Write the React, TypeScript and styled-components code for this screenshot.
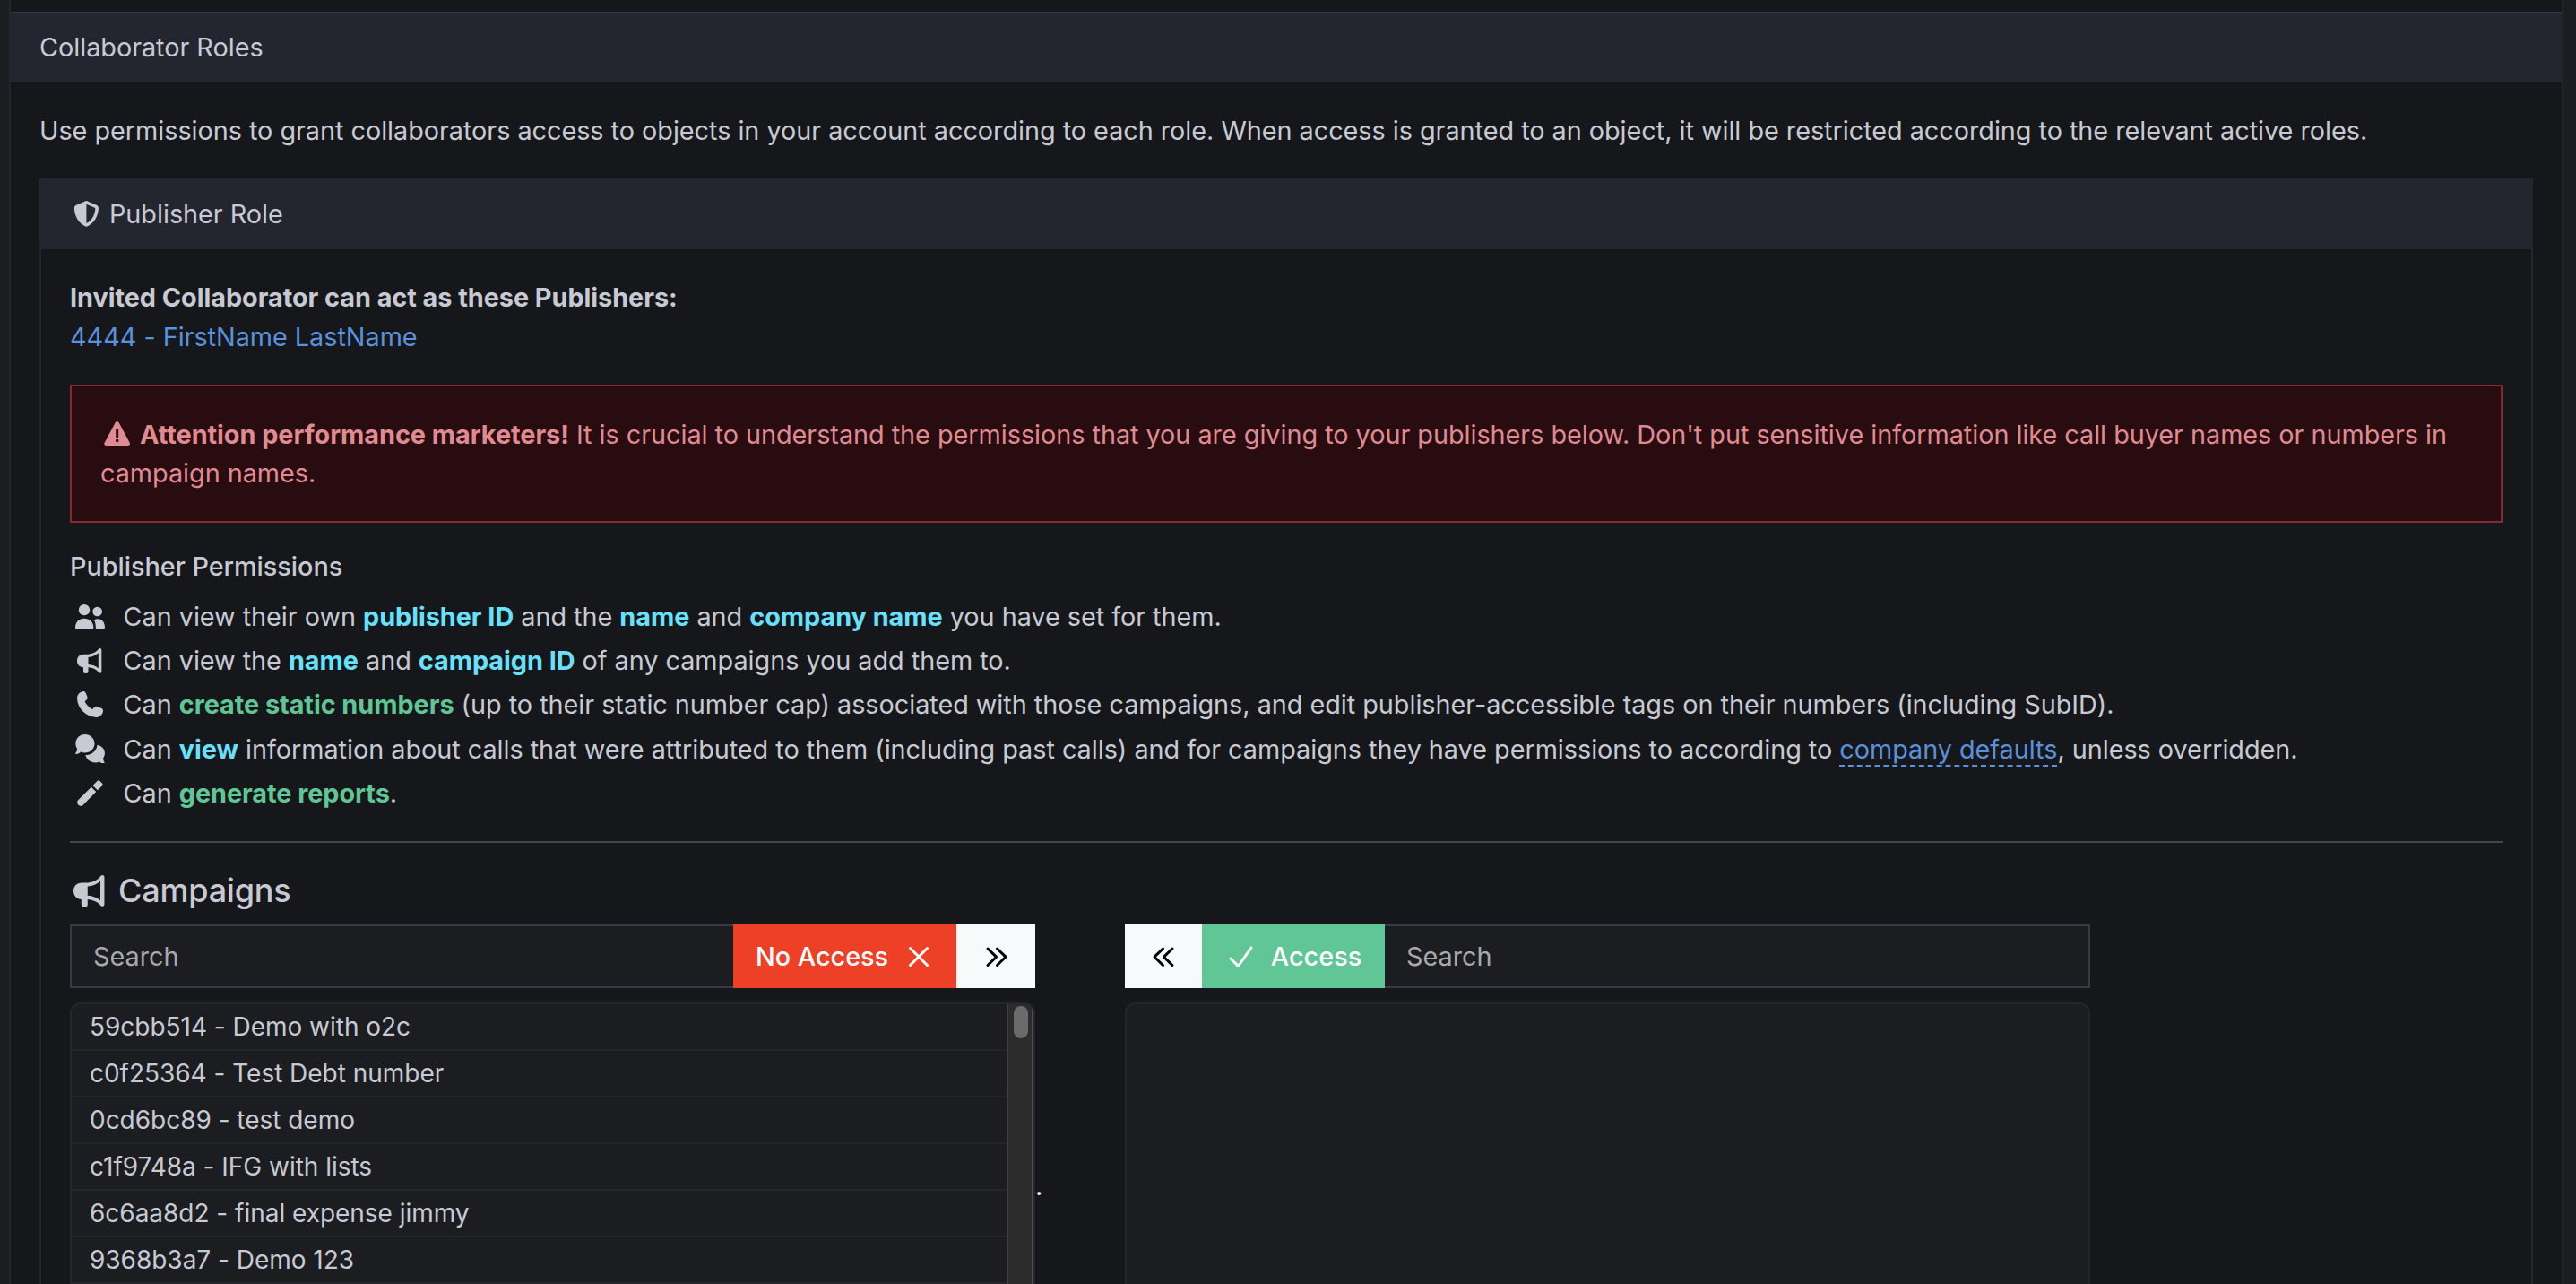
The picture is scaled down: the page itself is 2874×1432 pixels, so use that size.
import React from "react";
import styled, { createGlobalStyle } from "styled-components";
import { FaShieldHalved } from "react-icons/fa6";

const color = {
  page: "#16171b",
  gutter: "#1c1d21",
  surface: "#1c1d21",
  header: "#24262f",
  line: "#24262e",
  input: "#373b45",
  text: "#c8cad3",
  link: "#5a91dc",
  info: "#68e1fd",
  success: "#60c695",
  danger: "#ed4027",
};

const GlobalStyle = createGlobalStyle`
  *, *::before, *::after { box-sizing: border-box; }
  body {
    margin: 0;
    background: ${color.gutter};
    color: ${color.text};
    font: 400 28.8px/43.2px Inter, sans-serif;
    letter-spacing: -0.025px;
  }
`;

const Page = styled.div`
  height: 1432px;
  overflow: hidden;
  padding: 0 14px 0 10px;
`;

const Panel = styled.section`
  height: 1432px;
  overflow: hidden;
  background: ${color.page};
  border: 2px solid ${color.line};
  border-width: 0 2px;
  padding-top: 13px;
`;

const PanelHeader = styled.header`
  height: 79px;
  padding: 16px 32px 0;
  background: ${color.header};
  border-top: 2px solid ${color.input};
`;

const PanelBody = styled.div`
  padding: 32px 32px 0;
`;

const Intro = styled.p`
  margin: 0 0 32px;
  height: 43px;
`;

const Card = styled.section`
  border: 2px solid ${color.line};
  border-top: 0;
`;

const CardHeader = styled.header`
  height: 79px;
  padding: 0 32px;
  display: flex;
  align-items: center;
  gap: 8px;
  background: ${color.header};
`;

const CardBody = styled.div`
  padding: 32px 32px 0;
`;

const IconSlot = styled.span<{ $w: number }>`
  display: inline-flex;
  justify-content: center;
  align-items: center;
  flex: none;
  width: ${(p) => p.$w}px;
`;

const Publishers = styled.div`
  height: 87px;
  margin-bottom: 32px;
  line-height: 43.8px;
`;

const Strong = styled.strong<{ $tone?: "info" | "success" }>`
  font-weight: 700;
  color: ${(p) => (p.$tone ? color[p.$tone] : "inherit")};
`;

const Link = styled.a`
  color: ${color.link};
  text-decoration: none;
`;

const DashedLink = styled(Link)`
  border-bottom: 2px dashed ${color.link};
`;

const Alert = styled.div`
  height: 154px;
  padding: 32px;
  background: #280c0f;
  border: 2px solid #842a30;
  color: #e08a91;

  svg {
    vertical-align: -2px;
  }
`;

const AlertIcon = styled.span`
  display: inline-block;
  width: 36px;
  text-align: center;
`;

const SubTitle = styled.h6`
  margin: 27px 0 9px;
  height: 44px;
  font: inherit;
  font-weight: 500;
`;

const Permissions = styled.ul`
  list-style: none;
  margin: 0;
  padding: 0;
`;

const Permission = styled.li`
  height: 49.2px;
  display: flex;
  align-items: center;
  white-space: nowrap;
`;

const PermissionText = styled.span`
  margin-left: 15.5px;
`;

const Rule = styled.hr`
  margin: 29.5px 0 28px;
  border: 0;
  height: 2px;
  background: #434447;
`;

const SectionTitle = styled.h4`
  margin: 0 0 13px;
  height: 50px;
  display: flex;
  align-items: center;
  gap: 11px;
  font-size: 36px;
  font-weight: 500;
  letter-spacing: -0.2px;
`;

const Transfer = styled.div`
  display: grid;
  grid-template-columns: 1077px 100px 1077px;
`;

const Column = styled.div`
  display: flex;
  flex-direction: column;
  gap: 16px;
`;

const SearchGroup = styled.div`
  display: flex;
  height: 71px;
`;

const SearchInput = styled.input<{ $side: "left" | "right" }>`
  flex: 1;
  min-width: 0;
  height: 71px;
  padding: 0 24px 1px;
  background: ${color.surface};
  border: 2px solid ${color.input};
  border-${(p) => (p.$side === "left" ? "right" : "left")}: 0;
  border-radius: 0;
  outline: 0;
  color: ${color.text};
  font: inherit;

  &::placeholder {
    color: #a8a9ac;
    opacity: 1;
  }
`;

const GroupButton = styled.button<{
  $kind: "danger" | "success" | "light";
  $w: number;
  $gap?: number;
  $pad?: string;
}>`
  width: ${(p) => p.$w}px;
  flex: none;
  display: flex;
  align-items: center;
  justify-content: center;
  gap: ${(p) => p.$gap || 0}px;
  padding: ${(p) => p.$pad || "0"};
  border: 0;
  font: inherit;
  font-weight: 500;
  background: ${(p) => (p.$kind === "light" ? "#f8f9fb" : color[p.$kind])};
  color: ${(p) => (p.$kind === "light" ? "#000" : "#fff")};
`;

const ListBox = styled.div`
  height: 410px;
  display: flex;
  overflow: hidden;
  background: ${color.surface};
  border: 2px solid ${color.line};
  border-radius: 12px;
`;

const Items = styled.ul`
  flex: 1;
  margin: 0;
  padding: 0;
  list-style: none;
`;

const Item = styled.li`
  height: 52px;
  padding-left: 20px;
  border-bottom: 2px solid ${color.line};
  font-size: 28px;
  line-height: 50px;
`;

const ScrollTrack = styled.div`
  width: 30px;
  padding: 2px 4px 0 6px;
  background: #2c2c2c;
  border-left: 2px solid #3d3d3d;
  border-right: 2px solid #505050;
`;

const ScrollThumb = styled.div`
  width: 16px;
  height: 36px;
  border-radius: 8px;
  background: #6b6b6b;
`;

const Separator = styled.div`
  padding-top: 270px;
  color: #fff;
`;

const UsersIcon = () => (
  <svg width="33" height="28" viewBox="41 42 99 84" fill="currentColor">
    <circle cx="71" cy="60.500" r="18.500" />
    <circle cx="115" cy="66" r="16" />
    <path d="M41 120C41 101 54 89 71 89S102 101 102 120Q102 126 96 126H47Q41 126 41 120Z" />
    <path d="M104 95C108 92 112 91 117 91C131 91 140 103 140 120Q140 126 134 126H108C110 123 110 121 109.500 117C109 108 108 101 104 95Z" />
  </svg>
);

const BullhornIcon = ({ size }: { size: number }) => (
  <svg width={size * 0.976} height={size} viewBox="47 188 82 84" fill="currentColor">
    <path
      fillRule="evenodd"
      d="M69 208H84C99 207 109 202 118 192Q120 188 124 188Q129 188 129 193V266Q129 271 124 271Q120 271 118 267C110 258 99 253 84.500 252V266Q84.500 272 78.500 272H74Q68 272 68 266V252C55 251 47 242 47 230C47 217 56 208 69 208ZM84.500 218V242C98 243 109 247 118.500 255V204C109 212 98 217 84.500 218Z"
    />
  </svg>
);

const PhoneIcon = () => (
  <svg width="29" height="29" viewBox="47 333 86 86" fill="currentColor">
    <path d="M65 333.500C69 332 74 334 75.500 338L81 351C82.500 354.500 81.500 358.500 78.500 361L72.500 366C77.500 377 87 386.500 98 392L104 386C106.500 383 110.500 382 114 383.500L128 389.500C132 391 134 395.500 133 399.500C130 411 122 419 110 419C76 417 49 391 47 357C47 345 54 336 65 333.500Z" />
  </svg>
);

const ChatIcon = () => (
  <svg width="33" height="32.500" viewBox="41 474 98 97" fill="currentColor">
    <path d="M73 474C91 474 105 487 105 504.500C105 522 91 535 73 535C68 535 63 534 59 532C55 536 50 539 44 540Q41 540 41 537C45 532 48 526 47 522C43.500 517 42 511 42 504.500C42 487 55 474 73 474Z" />
    <path d="M114 509C129 512 139 523 139 537C139 543 137 548 134 553C133 558 135 563 138 567Q139 571 135 571C130 571 126 569 122 565C118 567 113 568 108 568C91 568 77 557 75 543C94 543 112 530 114 509Z" />
  </svg>
);

const MarkerIcon = () => (
  <svg width="29" height="29" viewBox="47 627 86 87" fill="currentColor">
    <path d="M94 650L110 666L66 711Q62 715 58 713L50 710L47.500 703Q46 698 50 694Z" />
    <path d="M99 645L114 630Q118 626 122 629L131 638Q134 642 131 646L115 661Z" />
  </svg>
);

const WarningIcon = () => (
  <svg width="29" height="27" viewBox="136 780 87 81" fill="currentColor">
    <path
      fillRule="evenodd"
      d="M174 784Q180 776 186 784L222 851Q226 860 216 861H144Q134 860 138 851ZM175.500 808V831Q175.500 835 180 835T184.500 831V808Q184.500 804 180 804T175.500 808ZM180 839A5.500 5.500 0 1 0 180 850A5.500 5.500 0 1 0 180 839Z"
    />
  </svg>
);

const StrokeIcon = ({ w, d }: { w: number; d: string }) => (
  <svg width={w} height="26" viewBox={`0 0 ${w} 26`} fill="none" stroke="currentColor" strokeWidth="3" strokeLinecap="round" strokeLinejoin="round">
    <path d={d} />
  </svg>
);

const campaigns = [
  "59cbb514 - Demo with o2c",
  "c0f25364 - Test Debt number",
  "0cd6bc89 - test demo",
  "c1f9748a - IFG with lists",
  "6c6aa8d2 - final expense jimmy",
  "9368b3a7 - Demo 123",
];

const PermissionRow = ({ icon, children }: { icon: React.ReactNode; children: React.ReactNode }) => (
  <Permission>
    <IconSlot $w={44}>{icon}</IconSlot>
    <PermissionText>{children}</PermissionText>
  </Permission>
);

export default function App() {
  return (
    <Page>
      <GlobalStyle />
      <Panel>
        <PanelHeader>Collaborator Roles</PanelHeader>
        <PanelBody>
          <Intro>
            Use permissions to grant collaborators access to objects in your account according to each role. When access
            is granted to an object, it will be restricted according to the relevant active roles.
          </Intro>
          <Card>
            <CardHeader>
              <IconSlot $w={36}>
                <FaShieldHalved size={28.8} />
              </IconSlot>
              Publisher Role
            </CardHeader>
            <CardBody>
              <Publishers>
                <Strong>Invited Collaborator can act as these Publishers:</Strong>
                <br />
                <Link>4444 - FirstName LastName</Link>
              </Publishers>
              <Alert>
                <AlertIcon>
                  <WarningIcon />
                </AlertIcon>{" "}
                <Strong>Attention performance marketers!</Strong> It is crucial to understand the permissions that you
                are giving to your publishers below. Don't put sensitive information like call buyer names or numbers in
                campaign names.
              </Alert>
              <SubTitle>Publisher Permissions</SubTitle>
              <Permissions>
                <PermissionRow icon={<UsersIcon />}>
                  Can view their own <Strong $tone="info">publisher ID</Strong> and the{" "}
                  <Strong $tone="info">name</Strong> and <Strong $tone="info">company name</Strong> you have set for
                  them.
                </PermissionRow>
                <PermissionRow icon={<BullhornIcon size={28} />}>
                  Can view the <Strong $tone="info">name</Strong> and <Strong $tone="info">campaign ID</Strong> of any
                  campaigns you add them to.
                </PermissionRow>
                <PermissionRow icon={<PhoneIcon />}>
                  Can <Strong $tone="success">create static numbers</Strong> (up to their static number cap) associated
                  with those campaigns, and edit publisher-accessible tags on their numbers (including SubID).
                </PermissionRow>
                <PermissionRow icon={<ChatIcon />}>
                  Can <Strong $tone="info">view</Strong> information about calls that were attributed to them (including
                  past calls) and for campaigns they have permissions to according to{" "}
                  <DashedLink>company defaults</DashedLink>, unless overridden.
                </PermissionRow>
                <PermissionRow icon={<MarkerIcon />}>
                  Can <Strong $tone="success">generate reports</Strong>.
                </PermissionRow>
              </Permissions>
              <Rule />
              <SectionTitle>
                <IconSlot $w={43}>
                  <BullhornIcon size={35.3} />
                </IconSlot>
                Campaigns
              </SectionTitle>
              <Transfer>
                <Column>
                  <SearchGroup>
                    <SearchInput $side="left" placeholder="Search" />
                    <GroupButton $kind="danger" $w={249} $gap={21} $pad="0 4px 0 0">
                      No Access
                      <StrokeIcon w={26} d="M3.500 3.500L22.500 22.500M22.500 3.500L3.500 22.500" />
                    </GroupButton>
                    <GroupButton $kind="light" $w={88} $pad="0 0 0 1px">
                      <StrokeIcon w={26} d="M3 4L12.500 13.200L3 22.500M13.500 4L23 13.200L13.500 22.500" />
                    </GroupButton>
                  </SearchGroup>
                  <ListBox>
                    <Items>
                      {campaigns.map((name) => (
                        <Item key={name}>{name}</Item>
                      ))}
                    </Items>
                    <ScrollTrack>
                      <ScrollThumb />
                    </ScrollTrack>
                  </ListBox>
                </Column>
                <Separator>.</Separator>
                <Column>
                  <SearchGroup>
                    <GroupButton $kind="light" $w={86}>
                      <StrokeIcon w={26} d="M12.500 4L3 13.200L12.500 22.500M23 4L13.500 13.200L23 22.500" />
                    </GroupButton>
                    <GroupButton $kind="success" $w={204} $gap={20} $pad="0 0 0 4px">
                      <StrokeIcon w={27} d="M2 15L10.500 23.500L25 3" />
                      Access
                    </GroupButton>
                    <SearchInput $side="right" placeholder="Search" />
                  </SearchGroup>
                  <ListBox />
                </Column>
              </Transfer>
            </CardBody>
          </Card>
        </PanelBody>
      </Panel>
    </Page>
  );
}
